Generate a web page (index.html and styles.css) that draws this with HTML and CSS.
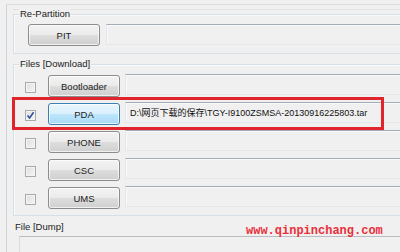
FILE: index.html
```html
<!DOCTYPE html>
<html>
<head>
<meta charset="utf-8">
<link rel="stylesheet" href="styles.css">
</head>
<body>
<div class="panel">
  <div class="panel-inner">
    <div class="group g1">
      <div class="group-title">Re-Partition</div>
      <div class="pit-row">
        <div class="btn">PIT</div>
        <div class="field"></div>
      </div>
    </div>
    <div class="group g2">
      <div class="group-title">Files [Download]</div>
      <div class="rows">
        <div class="row">
          <span class="chk"></span>
          <div class="btn">Bootloader</div>
          <div class="field"></div>
        </div>
        <div class="row">
          <span class="chk checked"><svg viewBox="0 0 9 9" width="9" height="9"><path d="M1.5 4.5 L3.6 7 L7.6 1.2" fill="none" stroke="#2c4f9c" stroke-width="1.6"/></svg></span>
          <div class="btn active">PDA</div>
          <div class="field path">D:\网页下载的保存\TGY-I9100ZSMSA-20130916225803.tar</div>
        </div>
        <div class="row">
          <span class="chk"></span>
          <div class="btn">PHONE</div>
          <div class="field"></div>
        </div>
        <div class="row">
          <span class="chk"></span>
          <div class="btn">CSC</div>
          <div class="field"></div>
        </div>
        <div class="row">
          <span class="chk"></span>
          <div class="btn">UMS</div>
          <div class="field"></div>
        </div>
      </div>
    </div>
    <div class="dump">
      <div class="dump-title">File [Dump]</div>
      <div class="dump-box"></div>
    </div>
  </div>
</div>
<div class="highlight"></div>
<div class="watermark">www.qinpinchang.com</div>
</body>
</html>
```
FILE: styles.css
```css
html, body {
  margin: 0;
  padding: 0;
}
body {
  width: 400px;
  height: 252px;
  overflow: hidden;
  background: #f0f0f0;
  font-family: "Liberation Sans", "Noto Sans CJK SC", sans-serif;
  font-size: 9px;
  color: #1a1a1a;
  position: relative;
}
.panel {
  margin: 4px 0 0 6px;
  border-top: 1px solid #dcdcdc;
  border-left: 1px solid #cdd3d8;
  padding: 4px 0 0 6px;
}
.panel-inner {
  border-top: 1px solid #e2e2e2;
  padding-top: 4px;
}
.group {
  border: 1px solid #d5dfe5;
  border-right: none;
  box-shadow: inset 1px 1px 0 #fafafa;
}
.group-title {
  margin: -7px 0 0 5px;
  width: fit-content;
  height: 12px;
  line-height: 12px;
  padding: 0 1px;
  background: #f0f0f0;
  font-size: 9.5px;
  color: #222;
}
.g1 {
  padding-bottom: 7px;
}
.pit-row {
  display: flex;
  gap: 6px;
  margin-top: 4px;
  padding-left: 14px;
  height: 22px;
}
.btn {
  flex: none;
  width: 70px;
  height: 20px;
  border: 1px solid #8c8c8c;
  border-radius: 3px;
  background: linear-gradient(#f3f3f3 0%, #ebebeb 48%, #dddddd 52%, #cfcfcf 100%);
  box-shadow: inset 0 0 0 1px rgba(255,255,255,0.7);
  display: flex;
  align-items: center;
  justify-content: center;
  font-size: 9.5px;
  color: #222;
}
.btn.active {
  border-color: #3c7fb1;
  background: linear-gradient(#eaf6fd 0%, #d9f0fc 48%, #bee6fd 52%, #a7d9f5 100%);
}
.field {
  flex: 1;
  height: 19px;
  border: 1px solid #e2e7ec;
  border-top-color: #a4adb7;
  border-right: none;
  background: #f0f0f0;
  box-shadow: inset 1px 1px 0 #f7f9fb;
}
.g2 {
  margin-top: 10px;
  padding-bottom: 6px;
}
.rows {
  margin-top: 5px;
  display: flex;
  flex-direction: column;
  gap: 6px;
}
.row {
  display: flex;
  align-items: center;
  height: 22px;
  gap: 5px;
}
.row .field {
  margin-top: -3px;
}
.chk {
  flex: none;
  width: 9px;
  height: 9px;
  margin: 2px 7px 0 11px;
  border: 1px solid #a9a9a9;
  background: linear-gradient(135deg, #dedede, #f6f6f6);
  box-shadow: inset 0 0 0 1px #f4f4f4;
  display: flex;
  align-items: center;
  justify-content: center;
}
.chk svg {
  display: block;
}
.field.path {
  padding: 4px 0 0 4px;
  height: 15px;
  font-family: "Liberation Sans", "Noto Sans CJK SC", sans-serif;
  font-size: 9px;
  line-height: 12px;
  color: #111;
  white-space: nowrap;
  overflow: hidden;
}
.dump {
  margin-left: -4px;
}
.dump-title {
  margin: 5px 0 0 6px;
  height: 12px;
  line-height: 12px;
  font-size: 9.5px;
  color: #222;
}
.dump-box {
  margin: 3px 0 0 10px;
  height: 16px;
  border-top: 1px solid #b9bcc0;
  border-left: 1px solid #d7dce1;
}
.highlight {
  position: absolute;
  left: 12px;
  top: 97px;
  width: 366px;
  height: 27px;
  border: 3px solid #e1232b;
}
.watermark {
  position: absolute;
  left: 246px;
  top: 224px;
  font-family: "Liberation Mono", monospace;
  font-size: 12px;
  line-height: 14px;
  color: #ea2f3a;
  font-weight: bold;
}
```
